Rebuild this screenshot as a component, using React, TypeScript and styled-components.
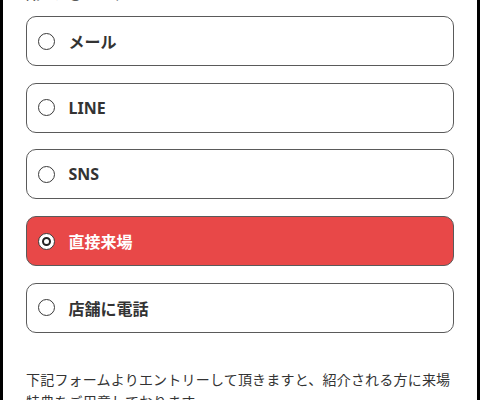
import styled, { createGlobalStyle } from "styled-components";

const GlobalStyle = createGlobalStyle`
  html, body {
    margin: 0;
    padding: 0;
    background: #000;
  }
  body {
    font-family: "Noto Sans", "Noto Sans CJK JP", sans-serif;
    color: #333;
  }
`;

const Page = styled.div`
  margin: -16px 3px 0;
  background: #fff;
  padding: 0 23px 0;
  height: 416px;
  overflow: hidden;
`;

const Label = styled.div`
  font-size: 14px;
  line-height: 20px;
  font-weight: 700;
  margin-bottom: 12px;
`;

const Options = styled.div`
  display: flex;
  flex-direction: column;
  gap: 16.7px;
`;

const Option = styled.label<{ selected: boolean }>`
  display: flex;
  align-items: center;
  gap: 14px;
  height: 50px;
  box-sizing: border-box;
  padding: 0 10px;
  border: 1.5px solid #5a5a5a;
  border-radius: 10px;
  background: ${({ selected }) => (selected ? "#e84848" : "#fff")};
  color: ${({ selected }) => (selected ? "#fff" : "#333")};
  font-size: 16px;
  font-weight: 700;
  cursor: pointer;
`;

const Radio = styled.span<{ selected: boolean }>`
  width: 17px;
  height: 17px;
  margin-left: 0.5px;
  box-sizing: border-box;
  border-radius: 50%;
  border: 1.5px solid #3a3a3a;
  background: #fff;
  display: flex;
  align-items: center;
  justify-content: center;
  flex-shrink: 0;

  &::after {
    content: "";
    display: ${({ selected }) => (selected ? "block" : "none")};
    width: 9px;
    height: 9px;
    box-sizing: border-box;
    border-radius: 50%;
    border: 2.5px solid #222;
    background: #fff;
  }
`;

const Note = styled.p`
  margin: 36px 0 0;
  font-size: 14px;
  line-height: 22px;
  font-weight: 400;
  letter-spacing: 0.2px;
  font-feature-settings: "palt" 0;
  color: #333;
`;

const options = ["メール", "LINE", "SNS", "直接来場", "店舗に電話"];

function App() {
  const selected = "直接来場";
  return (
    <>
      <GlobalStyle />
      <Page>
        <Label>知ったきっかけ</Label>
        <Options>
          {options.map((o) => (
            <Option key={o} selected={o === selected}>
              <Radio selected={o === selected} />
              {o}
            </Option>
          ))}
        </Options>
        <Note>
          下記フォームよりエントリーして頂きますと、紹介される方に来場特典をご用意しております。
        </Note>
      </Page>
    </>
  );
}

export default App;
